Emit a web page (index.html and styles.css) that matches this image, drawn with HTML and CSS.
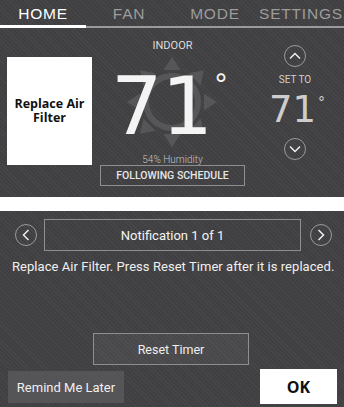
FILE: index.html
```html
<!DOCTYPE html>
<html lang="en">
<head>
<meta charset="utf-8">
<title>Thermostat</title>
<link rel="stylesheet" href="styles.css">
</head>
<body>
<div class="screen">
  <section class="home">
    <nav class="tabs">
      <div class="tab active">HOME</div>
      <div class="tab">FAN</div>
      <div class="tab">MODE</div>
      <div class="tab">SETTINGS</div>
    </nav>
    <div class="status">
      <div class="alert-card">Replace Air Filter</div>
      <div class="indoor">
        <svg class="sun" viewBox="-50 -50 100 100" width="100" height="100" aria-hidden="true">
          <circle r="26" fill="none" stroke="#565557" stroke-width="6"/>
          <g fill="#565557">
            <polygon points="-8.5,-32 0,-45 8.5,-32"/>
            <polygon points="-8.5,-32 0,-45 8.5,-32" transform="rotate(45)"/>
            <polygon points="-8.5,-32 0,-45 8.5,-32" transform="rotate(90)"/>
            <polygon points="-8.5,-32 0,-45 8.5,-32" transform="rotate(135)"/>
            <polygon points="-8.5,-32 0,-45 8.5,-32" transform="rotate(180)"/>
            <polygon points="-8.5,-32 0,-45 8.5,-32" transform="rotate(225)"/>
            <polygon points="-8.5,-32 0,-45 8.5,-32" transform="rotate(270)"/>
            <polygon points="-8.5,-32 0,-45 8.5,-32" transform="rotate(315)"/>
          </g>
        </svg>
        <div class="indoor-label">INDOOR</div>
        <div class="temp">71<span class="temp-deg">°</span></div>
        <div class="humidity">54% Humidity</div>
        <div class="schedule">FOLLOWING SCHEDULE</div>
      </div>
      <div class="setpoint">
        <div class="circle-btn">
          <svg viewBox="0 0 22 22" width="22" height="22"><path d="M6 13.5 L11 8.5 L16 13.5" fill="none" stroke="#eeeeee" stroke-width="1.5"/></svg>
        </div>
        <div class="set-label">SET TO</div>
        <div class="set-temp">71<span class="set-deg">°</span></div>
        <div class="circle-btn">
          <svg viewBox="0 0 22 22" width="22" height="22"><path d="M6 8.5 L11 13.5 L16 8.5" fill="none" stroke="#eeeeee" stroke-width="1.5"/></svg>
        </div>
      </div>
    </div>
  </section>
  <div class="divider"></div>
  <section class="notice">
    <div class="notice-nav">
      <div class="circle-btn">
        <svg viewBox="0 0 22 22" width="22" height="22"><path d="M13.5 6 L8.5 11 L13.5 16" fill="none" stroke="#eeeeee" stroke-width="1.5"/></svg>
      </div>
      <div class="notice-title">Notification 1 of 1</div>
      <div class="circle-btn">
        <svg viewBox="0 0 22 22" width="22" height="22"><path d="M8.5 6 L13.5 11 L8.5 16" fill="none" stroke="#eeeeee" stroke-width="1.5"/></svg>
      </div>
    </div>
    <p class="message">Replace Air Filter. Press Reset Timer after it is replaced.</p>
    <div class="reset-row"><div class="reset-btn">Reset Timer</div></div>
    <div class="actions">
      <div class="remind-btn">Remind Me Later</div>
      <div class="ok-btn">OK</div>
    </div>
  </section>
</div>
</body>
</html>
```

FILE: styles.css
```css
* { box-sizing: border-box; }
html, body { margin: 0; padding: 0; }
body {
  width: 344px;
  height: 407px;
  overflow: hidden;
  background: #fff;
  font-family: Roboto, "Liberation Sans", sans-serif;
}
.screen {
  width: 344px;
  height: 407px;
  display: flex;
  flex-direction: column;
}
.home, .notice {
  background-color: #403f41;
  background-image: repeating-linear-gradient(45deg, rgba(255,255,255,0.035) 0 1px, rgba(0,0,0,0) 1px 3px);
}
.home { height: 197px; }
.divider { height: 14px; background: #ffffff; }
.notice { height: 196px; display: flex; flex-direction: column; }

/* tabs */
.tabs {
  display: grid;
  grid-template-columns: repeat(4, 86px);
  height: 28px;
}
.tab {
  height: 28px;
  padding-top: 6px;
  text-align: center;
  font-family: "Liberation Sans", sans-serif;
  font-size: 15.5px;
  line-height: 16px;
  letter-spacing: 0.8px;
  color: #9c9c9c;
  border-bottom: 2px solid #9a9a9a;
}
.tab.active {
  color: #ffffff;
  border-bottom: 3px solid #ffffff;
}

/* status row */
.status {
  display: flex;
  height: 169px;
}
.alert-card {
  margin: 29px 0 0 7px;
  width: 85px;
  height: 108px;
  background: #ffffff;
  color: #111;
  display: flex;
  align-items: center;
  justify-content: center;
  text-align: center;
  padding: 0 6px;
  font-family: "Open Sans", sans-serif;
  font-weight: 700;
  font-size: 12.5px;
  line-height: 14px;
}
.indoor {
  position: relative;
  margin-left: 8px;
  width: 145px;
  display: flex;
  flex-direction: column;
  align-items: center;
}
.sun {
  position: absolute;
  left: 22px;
  top: 24px;
}
.indoor-label {
  position: relative;
  margin-top: 12px;
  font-size: 11px;
  line-height: 12px;
  color: #dcdcdc;
}
.temp {
  position: relative;
  align-self: flex-start;
  margin-top: 21px;
  margin-left: 11px;
  font-family: "DejaVu Sans", sans-serif;
  font-size: 81px;
  line-height: 66px;
  color: #f4f4f4;
  letter-spacing: -1px;
  display: flex;
  align-items: flex-start;
}
.temp-deg {
  font-family: "DejaVu Sans", sans-serif;
  font-size: 28px;
  line-height: 28px;
  margin-left: 2px;
  margin-top: -2px;
  letter-spacing: 0;
}
.humidity {
  position: relative;
  margin-top: 15px;
  font-size: 10px;
  font-weight: 300;
  line-height: 11px;
  color: #c4c4c4;
}
.schedule {
  position: relative;
  width: 145px;
  height: 21px;
  border: 1px solid #8e8e8e;
  display: flex;
  align-items: center;
  justify-content: center;
  font-size: 10.5px;
  font-weight: 500;
  color: #e6e6e6;
}
.setpoint {
  margin-left: 17px;
  width: 66px;
  display: flex;
  flex-direction: column;
  align-items: center;
}
.circle-btn {
  width: 22px;
  height: 22px;
  border-radius: 50%;
  border: 1px solid #9a9a9a;
  display: flex;
  align-items: center;
  justify-content: center;
  flex: none;
}
.circle-btn svg { display: block; margin: -1px; }
.setpoint .circle-btn:first-child { margin-top: 17px; }
.set-label {
  margin-top: 7px;
  font-size: 10px;
  line-height: 11px;
  color: #cfcfcf;
}
.set-temp {
  margin-top: 10px;
  padding-left: 4px;
  font-family: "DejaVu Sans", sans-serif;
  font-size: 37px;
  line-height: 30px;
  color: #cdcdcd;
  display: flex;
  align-items: flex-start;
}
.set-deg {
  font-size: 14px;
  line-height: 14px;
  margin-left: 2px;
}
.setpoint .circle-btn:last-child { margin-top: 13px; }

/* notification */
.notice-nav {
  margin-top: 8px;
  padding-left: 15px;
  height: 32px;
  display: flex;
  align-items: center;
}
.notice-title {
  margin: 0 9px 0 7px;
  width: 257px;
  height: 32px;
  border: 1px solid #8e8e8e;
  display: flex;
  align-items: center;
  justify-content: center;
  font-size: 13px;
  color: #f4f4f4;
}
.message {
  margin: 8px 0 0 12px;
  font-size: 13px;
  line-height: 16px;
  color: #f0f0f0;
  letter-spacing: 0.05px;
  white-space: nowrap;
}
.reset-row {
  margin-top: 58px;
  padding-left: 93px;
  display: flex;
}
.reset-btn {
  width: 156px;
  height: 32px;
  border: 1px solid #8e8e8e;
  background: rgba(255,255,255,0.05);
  display: flex;
  align-items: center;
  justify-content: center;
  font-size: 12.5px;
  color: #f0f0f0;
}
.actions {
  margin-top: 4px;
  padding: 0 7px 0 8px;
  display: flex;
  justify-content: space-between;
  align-items: flex-start;
}
.remind-btn {
  margin-top: 2px;
  width: 116px;
  height: 32px;
  background: #555456;
  display: flex;
  align-items: center;
  justify-content: center;
  font-size: 13px;
  color: #f0f0f0;
}
.ok-btn {
  width: 77px;
  height: 35px;
  background: #ffffff;
  color: #111;
  display: flex;
  align-items: center;
  justify-content: center;
  font-family: "Open Sans", sans-serif;
  font-weight: 700;
  font-size: 16px;
}
```
